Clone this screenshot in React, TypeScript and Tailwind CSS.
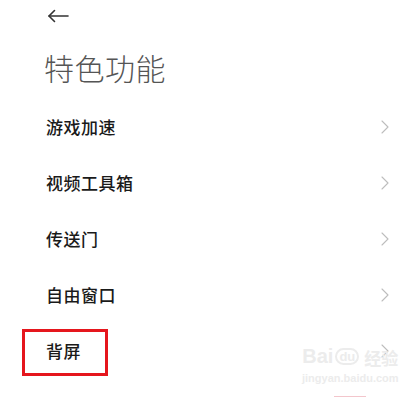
import { ChevronRight } from 'lucide-react';

const items = ['游戏加速', '视频工具箱', '传送门', '自由窗口', '背屏'];

export default function App() {
  return (
    <div
      className="relative w-[420px] h-[400px] overflow-hidden bg-white"
      style={{ fontFamily: '"Noto Sans CJK SC", "Noto Sans", sans-serif' }}
    >
      <div className="pl-[47px] pt-[9px] h-[16px] box-content">
        <svg width="22" height="14" viewBox="0 0 22 14" fill="none" stroke="#333" strokeWidth="1.6" strokeLinecap="round" strokeLinejoin="round">
          <path d="M21 7H2" />
          <path d="M7.5 1.5L2 7l5.5 5.5" />
        </svg>
      </div>

      <h1 className="pl-[44px] mt-[22px] text-[30px] leading-[40px] font-light text-[#555] tracking-[0.5px]">特色功能</h1>

      <ul className="mt-[12px]">
        {items.map((t, i) => (
          <li key={t} className="relative h-[56px] flex items-center justify-between pl-[46px] pr-[23px]">
            <span className="text-[17px] font-medium text-[#1a1a1a] tracking-[0.5px]">{t}</span>
            <ChevronRight size={24} strokeWidth={1.1} className="text-[#bdbdbd]" />
            {i === items.length - 1 && (
              <div className="absolute left-[22px] top-[6px] w-[86px] h-[47px] border-[3px] border-[#e5161d]" />
            )}
          </li>
        ))}
      </ul>

      <div className="absolute left-[302px] top-[346px] flex flex-col items-center text-[#ececec] pointer-events-none">
        <div className="flex items-end gap-[2px] leading-none">
          <span className="text-[20px] font-bold" style={{ fontFamily: '"Liberation Sans", sans-serif' }}>Bai</span>
          <span className="relative text-[13px] font-bold border-2 border-[#ececec] rounded-full px-[2px] mb-[1px]" style={{ fontFamily: '"Liberation Sans", sans-serif' }}>du</span>
          <span className="text-[17px] font-bold ml-[3px]">经验</span>
        </div>
        <span className="text-[11px] mt-[4px] font-bold" style={{ fontFamily: '"Liberation Sans", sans-serif' }}>jingyan.baidu.com</span>
      </div>
      <div className="absolute left-[334px] top-[396px] w-[32px] h-[1px] bg-[#f3c6cc]" />
    </div>
  );
}
